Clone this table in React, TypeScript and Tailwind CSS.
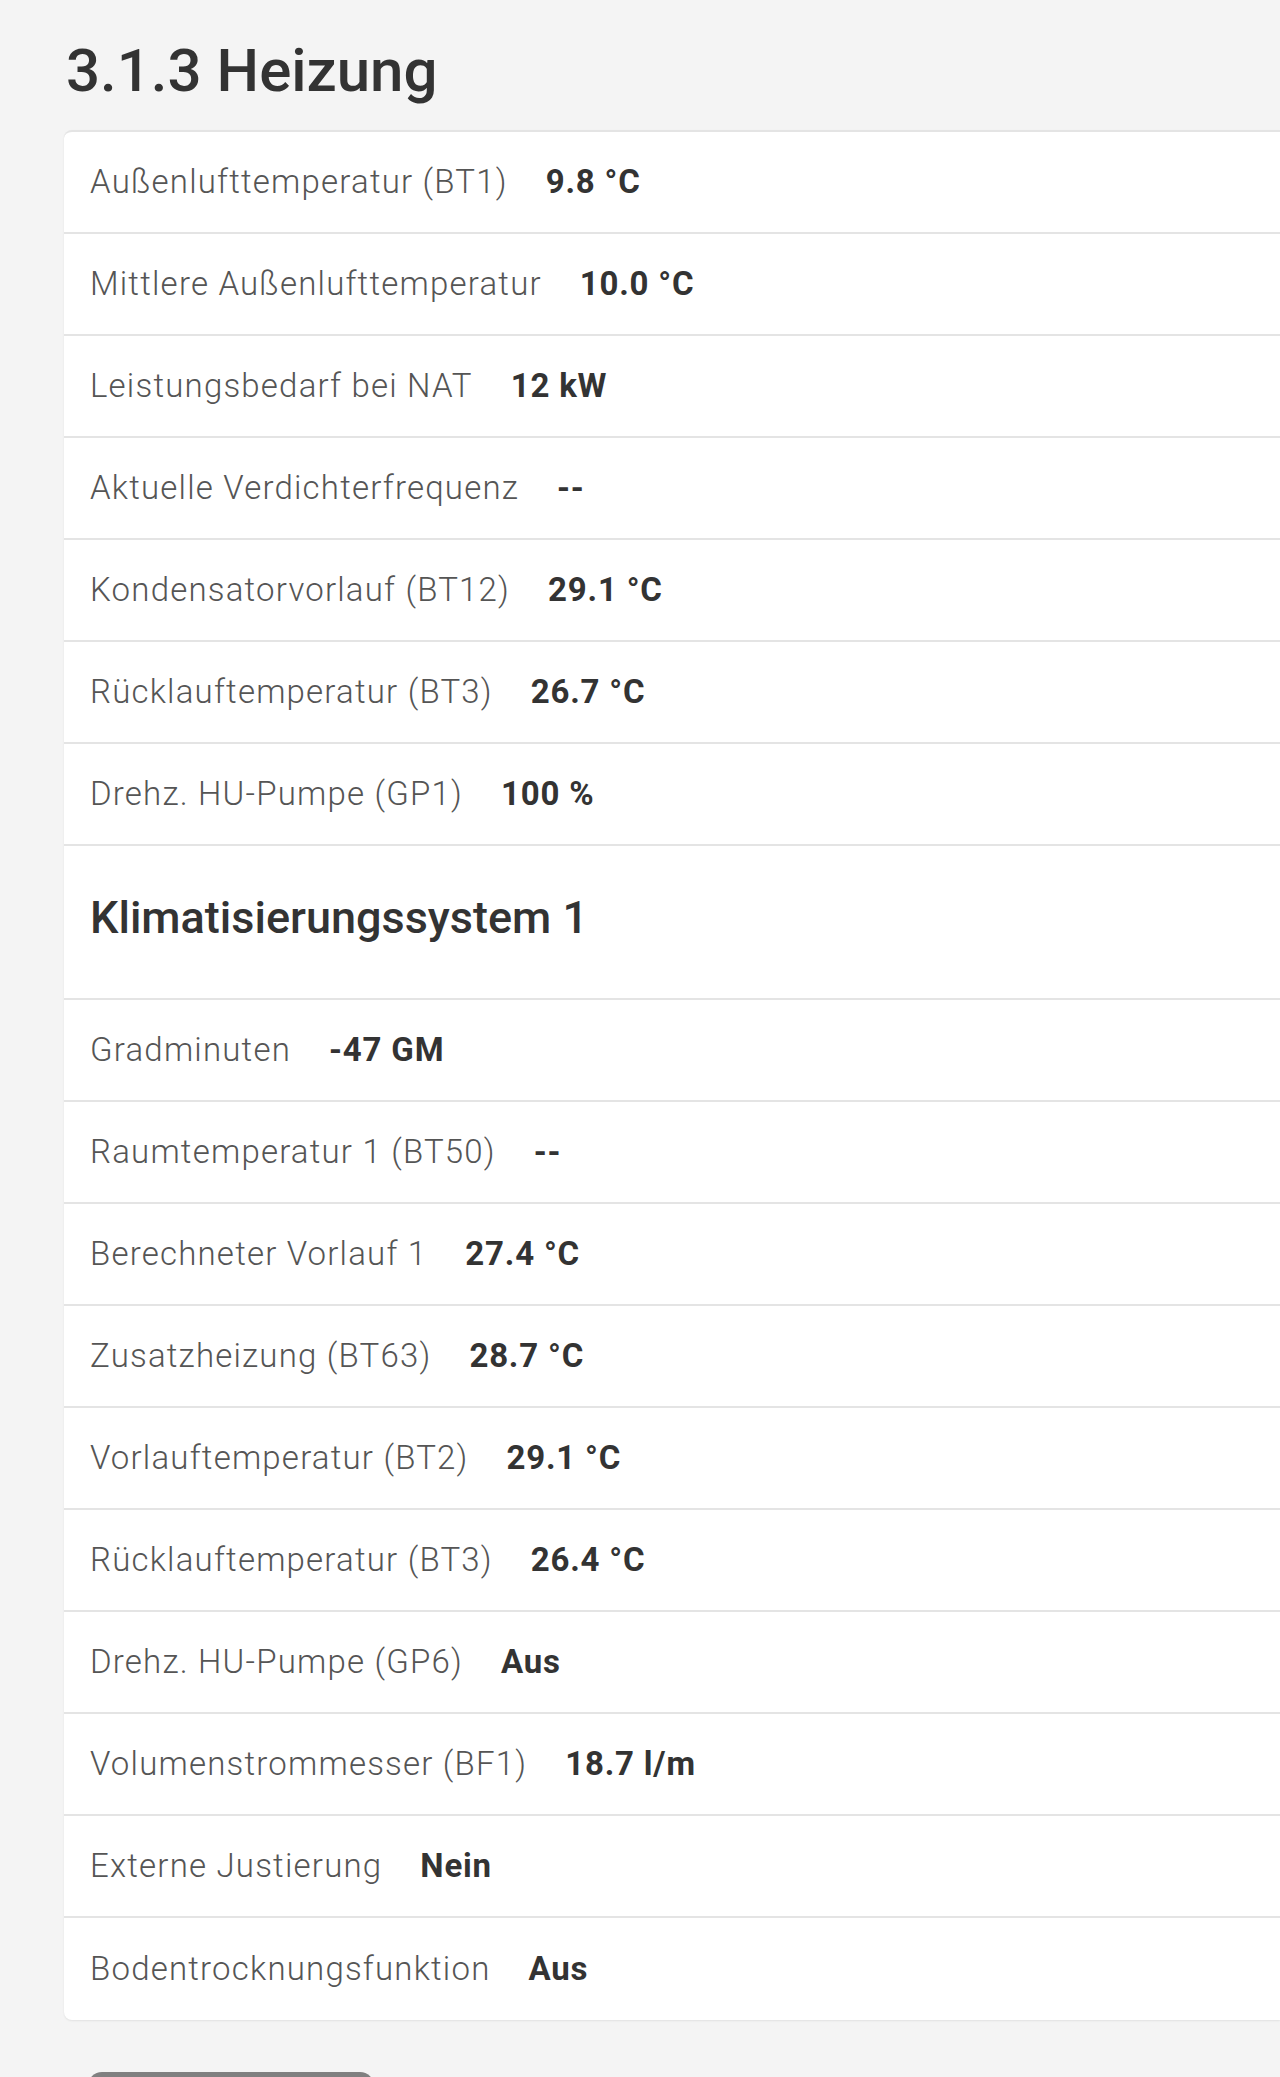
const rowsTop = [
  { label: "Außenlufttemperatur (BT1)", value: "9.8 °C" },
  { label: "Mittlere Außenlufttemperatur", value: "10.0 °C" },
  { label: "Leistungsbedarf bei NAT", value: "12 kW" },
  { label: "Aktuelle Verdichterfrequenz", value: "--" },
  { label: "Kondensatorvorlauf (BT12)", value: "29.1 °C" },
  { label: "Rücklauftemperatur (BT3)", value: "26.7 °C" },
  { label: "Drehz. HU-Pumpe (GP1)", value: "100 %" },
];

const rowsKlima = [
  { label: "Gradminuten", value: "-47 GM" },
  { label: "Raumtemperatur 1 (BT50)", value: "--" },
  { label: "Berechneter Vorlauf 1", value: "27.4 °C" },
  { label: "Zusatzheizung (BT63)", value: "28.7 °C" },
  { label: "Vorlauftemperatur (BT2)", value: "29.1 °C" },
  { label: "Rücklauftemperatur (BT3)", value: "26.4 °C" },
  { label: "Drehz. HU-Pumpe (GP6)", value: "Aus" },
  { label: "Volumenstrommesser (BF1)", value: "18.7 l/m" },
  { label: "Externe Justierung", value: "Nein" },
  { label: "Bodentrocknungsfunktion", value: "Aus" },
];

const Row = ({ label, value, last }: { label: string; value: string; last?: boolean }) => {
  return (
    <div
      className={`h-[102px] flex items-center pl-[26px] ${
        last ? "" : "border-b-2 border-[#e4e4e4]"
      }`}
    >
      <span className="font-light text-[33px] text-[#555555] tracking-[1.2px]">{label}</span>
      <span className="ml-[38px] font-bold text-[33px] text-[#333333] tracking-[0.8px]">
        {value}
      </span>
    </div>
  );
};

const App = () => {
  return (
    <div
      className="min-h-[2077px] bg-[#f4f4f4] overflow-hidden"
      style={{ fontFamily: "Roboto, 'Liberation Sans', sans-serif" }}
    >
      <h1 className="pl-[66px] pt-[41px] text-[60px] leading-[60px] font-medium text-[#333333]">
        3.1.3 Heizung
      </h1>

      <section className="ml-[64px] mt-[29px] bg-white rounded-l-[8px] border-t-2 border-[#e4e4e4] shadow-[0_1px_2px_rgba(0,0,0,0.08)]">
        {rowsTop.map((row, index) => (
          <Row key={index} label={row.label} value={row.value} />
        ))}
        <div className="h-[154px] flex items-center pl-[26px] pb-[8px] border-b-2 border-[#e4e4e4]">
          <h2 className="text-[45px] font-medium text-[#333333]">Klimatisierungssystem 1</h2>
        </div>
        {rowsKlima.map((row, index) => (
          <Row
            key={index}
            label={row.label}
            value={row.value}
            last={index === rowsKlima.length - 1}
          />
        ))}
      </section>

      <div className="ml-[88px] mt-[52px] w-[286px] h-[60px] rounded-[14px] bg-[#808080]"></div>
    </div>
  );
};

export default App;
